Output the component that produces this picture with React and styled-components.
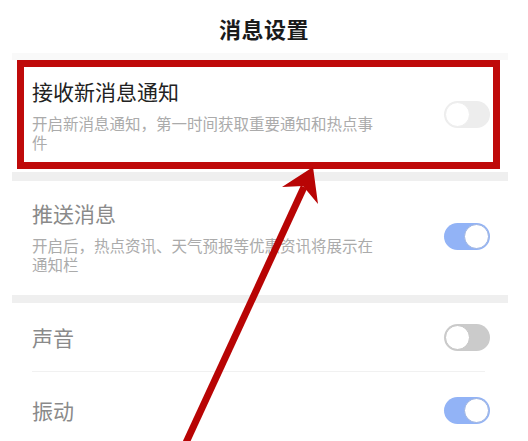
import React from "react";
import styled, { createGlobalStyle } from "styled-components";

const Global = createGlobalStyle`
  html, body { margin: 0; padding: 0; background: #fff; }
  body { font-family: "Noto Sans CJK SC", "Noto Sans", sans-serif; }
`;

const Page = styled.div`
  position: relative;
  width: 528px;
  height: 441px;
  overflow: hidden;
  background: #fff;
`;

const Header = styled.div`
  height: 52px;
  display: flex;
  align-items: center;
  justify-content: center;
  padding-top: 4px;
  box-sizing: border-box;
`;

const Title = styled.h1`
  margin: 0;
  font-size: 22px;
  font-weight: 700;
  color: #1a1a1a;
  letter-spacing: 0.5px;
`;

const List = styled.div`
  margin: 0 20px 0 12px;
  display: flex;
  flex-direction: column;
`;

const Band = styled.div`
  height: ${(p) => p.$h}px;
  margin-top: ${(p) => p.$mt || 0}px;
  background: ${(p) => p.$color};
`;

const Highlight = styled.div`
  margin: 0 8px 0 5px;
  border: 7px solid #bf0a0a;
`;

const Row = styled.div`
  display: flex;
  align-items: center;
  justify-content: space-between;
  box-sizing: border-box;
  min-height: ${(p) => p.$h}px;
  padding: ${(p) => p.$pad};
`;

const RowText = styled.div`
  display: flex;
  flex-direction: column;
`;

const RowTitle = styled.div`
  font-size: 21px;
  line-height: 28px;
  color: ${(p) => (p.$active ? "#222" : "#8a8a8a")};
`;

const RowDesc = styled.div`
  margin-top: 9px;
  max-width: 346px;
  font-size: 15.5px;
  line-height: 19px;
  color: #ababab;
`;

const Divider = styled.div`
  height: 1px;
  margin: 0 23px 0 20px;
  background: #f1f1f1;
`;

const Track = styled.div`
  flex: none;
  width: 46px;
  height: 27px;
  border-radius: 14px;
  background: ${(p) => p.$bg};
  display: flex;
  align-items: center;
  justify-content: ${(p) => (p.$on ? "flex-end" : "flex-start")};
  padding: 1px;
  box-sizing: border-box;
`;

const Thumb = styled.div`
  width: 25px;
  height: 25px;
  border-radius: 50%;
  background: #fff;
  box-sizing: border-box;
  border: 1.5px solid ${(p) => p.$border};
`;

const Toggle = ({ on, bg, border }) => (
  <Track $on={on} $bg={bg}>
    <Thumb $border={border} />
  </Track>
);

const Annotation = styled.svg`
  position: absolute;
  left: 0;
  top: 0;
  pointer-events: none;
`;

const BLUE = "#92b3f6";
const BLUE_EDGE = "#9db3e0";

export default function App() {
  return (
    <Page>
      <Global />
      <Header>
        <Title>消息设置</Title>
      </Header>
      <List>
        <Band $h={7} $color="#f9f9f9" $mt={1} />
        <Highlight>
          <Row $h={95} $pad="10px 3px 10px 8px">
            <RowText>
              <RowTitle $active>接收新消息通知</RowTitle>
              <RowDesc>开启新消息通知，第一时间获取重要通知和热点事件</RowDesc>
            </RowText>
            <Toggle on={false} bg="#ededed" border="#ededed" />
          </Row>
        </Highlight>
        <Band $h={9} $color="#efefef" $mt={3} />
        <Row $h={114} $pad="18px 18px 21px 20px">
          <RowText>
            <RowTitle>推送消息</RowTitle>
            <RowDesc>开启后，热点资讯、天气预报等优惠资讯将展示在通知栏</RowDesc>
          </RowText>
          <Toggle on bg={BLUE} border={BLUE_EDGE} />
        </Row>
        <Band $h={8} $color="#efefef" />
        <Row $h={68} $pad="0 18px 0 20px">
          <RowTitle>声音</RowTitle>
          <Toggle on={false} bg="#cbcbcb" border="#c4c4c4" />
        </Row>
        <Divider />
        <Row $h={76} $pad="0 18px 0 20px">
          <RowTitle>振动</RowTitle>
          <Toggle on bg={BLUE} border={BLUE_EDGE} />
        </Row>
      </List>
      <Annotation width="528" height="441" viewBox="0 0 528 441">
        <line x1="178" y1="460" x2="304" y2="187" stroke="#b80404" strokeWidth="7" />
        <polygon points="313,167 282,187 303,186 318,204" fill="#b80404" />
      </Annotation>
    </Page>
  );
}
